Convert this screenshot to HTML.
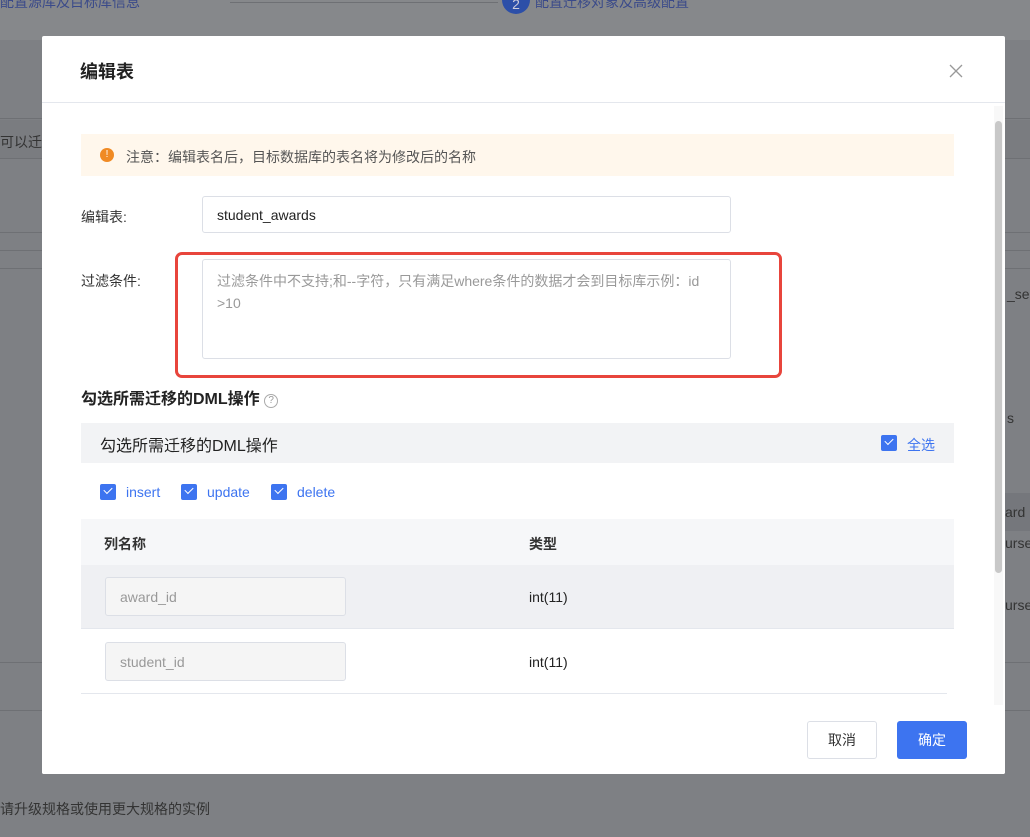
<!DOCTYPE html>
<html style="background:#7e8084"><head><meta charset="utf-8"><style>
*{box-sizing:border-box;margin:0;padding:0}
html,body{background:#7e8084}
body{width:1030px;height:837px;overflow:hidden;font-family:"Liberation Sans","Noto Sans CJK SC",sans-serif;position:relative;color:#333}
.abs{position:absolute}
.line{position:absolute;left:0;width:1030px;height:1px;background:#6e7074}
.bgt{position:absolute;color:#2a3a66;font-size:14px}
.modal{position:absolute;left:42px;top:36px;width:963px;height:738px;background:#fff;border-radius:2px;overflow:hidden}
.cb{position:absolute;width:16px;height:16px;background:#3d74f0;border-radius:2px}
.cb:after{content:"";position:absolute;left:4px;top:3px;width:7px;height:4px;border-left:1.6px solid #fff;border-bottom:1.6px solid #fff;transform:rotate(-45deg)}
.blue{color:#3d74f0;font-size:14px;position:absolute}
.inp{position:absolute;border:1px solid #dcdfe6;border-radius:3px;background:#fff}
</style></head><body>
<div class="abs" style="left:0;top:0;width:1030px;height:837px;background:#7e8084"></div>
<div class="abs" style="left:0;top:0;width:1030px;height:40px;background:#86888b"></div>
<div class="bgt" style="left:0;top:-8px;color:#3a4a8a">配置源库及目标库信息</div>
<div class="abs" style="left:230px;top:2px;width:268px;height:1px;background:#6e7074"></div>
<div class="abs" style="left:502px;top:-14px;width:28px;height:28px;border-radius:50%;background:#2c4fa8;color:#ccd;font-size:14px;text-align:center;line-height:36px">2</div>
<div class="bgt" style="left:535px;top:-8px;color:#3a4a8a">配置迁移对象及高级配置</div>
<div class="line" style="top:118px"></div>
<div class="abs" style="left:0;top:120px;width:1030px;height:38px;background:#7a7c80"></div>
<div class="bgt" style="left:0;top:132px;color:#333">可以迁移</div>
<div class="line" style="top:158px"></div>
<div class="line" style="top:232px"></div>
<div class="line" style="top:250px"></div>
<div class="line" style="top:268px"></div>
<div class="bgt" style="left:1007px;top:286px;color:#333">_se</div>
<div class="bgt" style="left:1007px;top:410px;color:#333">s</div>
<div class="abs" style="left:1005px;top:493px;width:25px;height:38px;background:#75777c"></div>
<div class="bgt" style="left:1005px;top:504px;color:#333">ard</div>
<div class="bgt" style="left:1005px;top:535px;color:#333">urse</div>
<div class="bgt" style="left:1005px;top:597px;color:#333">urse</div>
<div class="line" style="top:662px"></div>
<div class="line" style="top:710px"></div>
<div class="bgt" style="left:0;top:799px;color:#333">请升级规格或使用更大规格的实例</div>

<div class="modal">
 <div class="abs" style="left:38px;top:22px;font-size:18px;font-weight:bold;color:#222">编辑表</div>
 <svg class="abs" style="left:907px;top:28px" width="14" height="14" viewBox="0 0 14 14"><path d="M1 1L13 13M13 1L1 13" stroke="#999" stroke-width="1.3" fill="none"/></svg>
 <div class="abs" style="left:0;top:66px;width:963px;height:1px;background:#e4e7ed"></div>
 <div class="abs" style="left:952px;top:70px;width:9px;height:635px;background:#f8f8f8"></div>
 <div class="abs" style="left:953px;top:85px;width:7px;height:452px;background:#c8c8c8;border-radius:4px"></div>
 <div class="abs" style="left:39px;top:98px;width:873px;height:42px;background:#fff7ec"></div>
 <div class="abs" style="left:58px;top:112px;width:14px;height:14px;border-radius:50%;background:#f08a24;color:#fff;font-size:10px;text-align:center;line-height:14px">!</div>
 <div class="abs" style="left:84px;top:111px;font-size:14px;color:#555">注意：编辑表名后，目标数据库的表名将为修改后的名称</div>
 <div class="abs" style="left:39px;top:171px;font-size:14px;color:#333">编辑表:</div>
 <div class="inp" style="left:160px;top:160px;width:529px;height:37px"></div>
 <div class="abs" style="left:175px;top:171px;font-size:14px;color:#222">student_awards</div>
 <div class="abs" style="left:39px;top:235px;font-size:14px;color:#333">过滤条件:</div>
 <div class="abs" style="left:133px;top:216px;width:607px;height:126px;border:3px solid #e8453c;border-radius:7px"></div>
 <div class="inp" style="left:160px;top:223px;width:529px;height:100px"></div>
 <div class="abs" style="left:175px;top:234px;width:510px;font-size:14px;line-height:22px;color:#999">过滤条件中不支持;和--字符，只有满足where条件的数据才会到目标库示例：id<br>&gt;10</div>
 <div class="abs" style="left:39px;top:349px;font-size:16px;font-weight:bold;color:#222">勾选所需迁移的DML操作 <span style="display:inline-block;width:14px;height:14px;border:1px solid #aaa;border-radius:50%;font-size:10px;color:#999;text-align:center;line-height:12px;font-weight:normal;vertical-align:1px">?</span></div>
 <div class="abs" style="left:39px;top:387px;width:873px;height:40px;background:#f2f3f5"></div>
 <div class="abs" style="left:58px;top:396px;font-size:16px;color:#222">勾选所需迁移的DML操作</div>
 <div class="cb" style="left:839px;top:399px"></div>
 <div class="blue" style="left:865px;top:399px">全选</div>
 <div class="cb" style="left:58px;top:448px"></div><div class="blue" style="left:84px;top:448px">insert</div>
 <div class="cb" style="left:139px;top:448px"></div><div class="blue" style="left:165px;top:448px">update</div>
 <div class="cb" style="left:229px;top:448px"></div><div class="blue" style="left:255px;top:448px">delete</div>
 <div class="abs" style="left:39px;top:483px;width:873px;height:46px;background:#f6f7f9"></div>
 <div class="abs" style="left:62px;top:498px;font-size:14px;font-weight:bold;color:#333">列名称</div>
 <div class="abs" style="left:487px;top:498px;font-size:14px;font-weight:bold;color:#333">类型</div>
 <div class="abs" style="left:39px;top:529px;width:873px;height:64px;background:#eff0f3;border-bottom:1px solid #e4e7ed"></div>
 <div class="inp" style="left:63px;top:541px;width:241px;height:39px;background:#f5f5f5"></div>
 <div class="abs" style="left:78px;top:553px;font-size:14px;color:#999">award_id</div>
 <div class="abs" style="left:487px;top:553px;font-size:14px;color:#222">int(11)</div>
 <div class="abs" style="left:39px;top:657px;width:866px;height:1px;background:#e4e7ed"></div>
 <div class="inp" style="left:63px;top:606px;width:241px;height:39px;background:#f5f5f5"></div>
 <div class="abs" style="left:78px;top:618px;font-size:14px;color:#999">student_id</div>
 <div class="abs" style="left:487px;top:618px;font-size:14px;color:#222">int(11)</div>
 <div class="abs" style="left:0;top:669px;width:963px;height:69px;background:#fff"></div>
 <div class="abs" style="left:765px;top:685px;width:70px;height:38px;border:1px solid #dcdfe6;border-radius:3px;text-align:center;line-height:36px;font-size:14px;color:#333">取消</div>
 <div class="abs" style="left:855px;top:685px;width:70px;height:38px;background:#3d74f0;border-radius:3px;text-align:center;line-height:38px;font-size:14px;color:#fff">确定</div>
</div>
</body></html>
